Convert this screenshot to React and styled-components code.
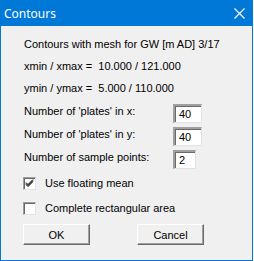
import React from 'react';
import styled, { createGlobalStyle } from 'styled-components';

const GlobalStyle = createGlobalStyle`
  html, body {
    margin: 0;
    padding: 0;
    background: #ffffff;
  }
`;

const Window = styled.div`
  width: 253px;
  height: 261px;
  box-sizing: border-box;
  display: flex;
  flex-direction: column;
  border: 1px solid #0078d7;
  border-top: none;
  background: #f0f0f0;
`;

const TitleBar = styled.div`
  height: 26px;
  flex: none;
  display: flex;
  align-items: center;
  justify-content: space-between;
  background: #0078d7;
  padding: 0 8px 0 4px;
  margin: 0 -1px;
  color: #ffffff;
  font-family: 'Noto Sans', 'Open Sans', sans-serif;
  font-size: 12px;
`;

const Body = styled.div`
  flex: 1;
  display: flex;
  flex-direction: column;
  padding: 12px 0 0 22px;
  font-family: 'Liberation Sans', Arial, sans-serif;
  font-size: 11px;
  color: #000000;
`;

const Line = styled.div`
  height: 13px;
  line-height: 13px;
  padding-left: 1px;
  white-space: pre;
  margin-bottom: 9px;
`;

const FieldRow = styled.div`
  display: flex;
  align-items: flex-start;
  margin-bottom: 4px;
`;

const FieldLabel = styled.div`
  width: 149px;
  padding: 1px 0 0 1px;
  line-height: 13px;
`;

const Input = styled.div`
  width: ${(p) => p.$w}px;
  height: 19px;
  box-sizing: border-box;
  background: #ffffff;
  border-style: solid;
  border-width: 2px 1px 1px 2px;
  border-color: #a0a0a0 #e3e3e3 #e3e3e3 #a0a0a0;
  box-shadow: inset 1px 1px 0 #696969;
  padding: 2px 0 0 4px;
  font-size: 11px;
  line-height: 13px;
`;

const CheckRow = styled.div`
  display: flex;
  align-items: center;
  height: 13px;
  margin-top: ${(p) => p.$top}px;
`;

const Box = styled.div`
  width: 13px;
  height: 13px;
  box-sizing: border-box;
  background: #ffffff;
  border-style: solid;
  border-width: 1px;
  border-color: #a0a0a0 #e3e3e3 #e3e3e3 #a0a0a0;
  box-shadow: inset 1px 1px 0 #696969;
  display: flex;
  align-items: center;
  justify-content: center;
  margin-right: 9px;
`;

const CheckText = styled.span`
  line-height: 13px;
  font-size: 11px;
`;

const Buttons = styled.div`
  display: flex;
  gap: 47px;
  margin-top: 9px;
`;

const Button = styled.div`
  width: 67px;
  height: 21px;
  box-sizing: border-box;
  display: flex;
  align-items: center;
  justify-content: center;
  background: #f0f0f0;
  border-style: solid;
  border-width: 1px;
  border-color: #ffffff #696969 #696969 #ffffff;
  box-shadow: inset -1px -1px 0 #a0a0a0;
  font-size: 11px;
`;

function CloseIcon() {
  return (
    <svg width="11" height="11" viewBox="0 0 11 11">
      <path d="M0.5 0.5 L10.5 10.5 M10.5 0.5 L0.5 10.5" stroke="#ffffff" strokeWidth="1.2" fill="none" />
    </svg>
  );
}

function Check() {
  return (
    <svg width="9" height="9" viewBox="0 0 9 9">
      <path d="M1 3.5 L3 5.5 L8 0.5 M1 4.5 L3 6.5 L8 1.5 M1 5.5 L3 7.5 L8 2.5" stroke="#000000" strokeWidth="1" fill="none" />
    </svg>
  );
}

function App() {
  return (
    <>
      <GlobalStyle />
      <Window>
        <TitleBar>
          <span>Contours</span>
          <CloseIcon />
        </TitleBar>
        <Body>
          <Line>Contours with mesh for GW [m AD] 3/17</Line>
          <Line>{'xmin / xmax =  10.000 / 121.000'}</Line>
          <Line>{'ymin / ymax =  5.000 / 110.000'}</Line>
          <FieldRow>
            <FieldLabel>Number of 'plates' in x:</FieldLabel>
            <Input $w={29}>40</Input>
          </FieldRow>
          <FieldRow>
            <FieldLabel>Number of 'plates' in y:</FieldLabel>
            <Input $w={29}>40</Input>
          </FieldRow>
          <FieldRow>
            <FieldLabel>Number of sample points:</FieldLabel>
            <Input $w={23}>2</Input>
          </FieldRow>
          <CheckRow $top={4}>
            <Box>
              <Check />
            </Box>
            <CheckText>Use floating mean</CheckText>
          </CheckRow>
          <CheckRow $top={12}>
            <Box />
            <CheckText>Complete rectangular area</CheckText>
          </CheckRow>
          <Buttons>
            <Button>OK</Button>
            <Button>Cancel</Button>
          </Buttons>
        </Body>
      </Window>
    </>
  );
}

export default App;
